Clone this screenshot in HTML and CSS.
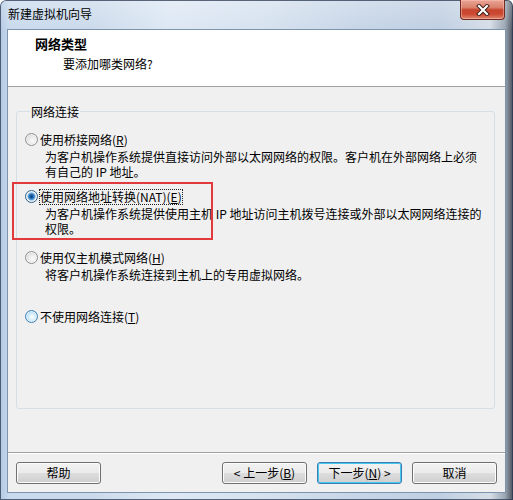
FILE: index.html
```html
<!DOCTYPE html>
<html>
<head>
<meta charset="utf-8">
<title>新建虚拟机向导</title>
<link rel="stylesheet" href="styles.css">
</head>
<body>
<div class="window">
  <div class="titlebar">
    <span class="title">新建虚拟机向导</span>
    <div class="close">
      <svg width="14" height="12" viewBox="0 0 14 12">
        <path d="M3 2 L11 10 M11 2 L3 10" stroke="#3a1a16" stroke-width="4" stroke-linecap="square" fill="none"/>
        <path d="M3 2 L11 10 M11 2 L3 10" stroke="#ffffff" stroke-width="2.2" stroke-linecap="square" fill="none"/>
      </svg>
    </div>
  </div>
  <div class="client">
    <div class="header">
      <div class="h-title">网络类型</div>
      <div class="h-sub">要添加哪类网络?</div>
    </div>
    <div class="body">
      <fieldset class="group">
        <legend>网络连接</legend>
        <div class="opt opt1">
          <div class="row"><span class="radio"></span><span class="label">使用桥接网络(<u>R</u>)</span></div>
          <div class="desc">为客户机操作系统提供直接访问外部以太网网络的权限。客户机在外部网络上必须<br>有自己的 IP 地址。</div>
        </div>
        <div class="opt opt2">
          <div class="row"><span class="radio checked"></span><span class="label focus">使用网络地址转换(NAT)(<u>E</u>)</span></div>
          <div class="desc">为客户机操作系统提供使用主机 IP 地址访问主机拨号连接或外部以太网网络连接的<br>权限。</div>
        </div>
        <div class="opt opt3">
          <div class="row"><span class="radio"></span><span class="label">使用仅主机模式网络(<u>H</u>)</span></div>
          <div class="desc">将客户机操作系统连接到主机上的专用虚拟网络。</div>
        </div>
        <div class="opt opt4">
          <div class="row"><span class="radio hover"></span><span class="label">不使用网络连接(<u>T</u>)</span></div>
        </div>
      </fieldset>
      <div class="footer">
        <div class="btn help">帮助</div>
        <div class="btn back">&lt; 上一步(<u>B</u>)</div>
        <div class="btn next default">下一步(<u>N</u>) &gt;</div>
        <div class="btn cancel">取消</div>
      </div>
    </div>
  </div>
  <div class="annot"></div>
</div>
</body>
</html>
```

FILE: styles.css
```css
html, body {
  margin: 0;
  padding: 0;
}
body {
  width: 513px;
  height: 500px;
  overflow: hidden;
  font-family: "Noto Sans CJK SC", "Noto Sans", sans-serif;
  font-size: 12px;
  color: #000;
  background: #fff;
}
.window {
  position: relative;
  width: 513px;
  height: 500px;
  box-sizing: border-box;
  display: flex;
  flex-direction: column;
  border-radius: 6px 6px 0 0;
  background:
    linear-gradient(180deg, rgba(255,255,255,0.25) 0px, rgba(255,255,255,0) 30px),
    linear-gradient(90deg, #b3c9e3 0px, #c9daee 10px, #cbdaeb 90px, #dde8f4 170px, #d6e2ef 260px, #c6d5e7 360px, #bfcfe2 440px, #d5dde7 490px, #9aa6b4 505px, #4a515c 513px);
  box-shadow: inset 0 0 0 1px rgba(40, 55, 80, 0.75);
}
.titlebar {
  height: 30px;
  display: flex;
  align-items: flex-start;
  flex-shrink: 0;
}
.title {
  margin: 6px 0 0 8px;
  line-height: 16px;
  font-size: 12px;
  color: #000;
}
.close {
  margin-left: auto;
  margin-right: 8px;
  width: 45px;
  height: 20px;
  box-sizing: border-box;
  border: 1px solid #6e2b22;
  border-top: none;
  border-radius: 0 0 4px 4px;
  background: linear-gradient(180deg, #eaa595 0%, #d9806c 40%, #c7442d 52%, #cc4a33 75%, #e08a72 100%);
  box-shadow: inset 0 0 0 1px rgba(255, 200, 190, 0.45);
  display: flex;
  align-items: center;
  justify-content: center;
}
.client {
  flex: 1;
  margin: 0 8px 8px 8px;
  display: flex;
  flex-direction: column;
  box-shadow: 0 0 0 1px #7d93ae;
  min-height: 0;
}
.header {
  height: 57px;
  box-sizing: border-box;
  background: #fff;
  border-bottom: 1px solid #a0a0a0;
  padding: 6px 0 0 27px;
  flex-shrink: 0;
}
.h-title {
  font-weight: bold;
  font-size: 13px;
  line-height: 16px;
}
.h-sub {
  margin: 4px 0 0 28px;
  line-height: 15px;
}
.body {
  flex: 1;
  background: #f0f0f0;
  display: flex;
  flex-direction: column;
  padding: 0 10px 0 8px;
  min-height: 0;
}
.group {
  margin: 17px 0 0 0;
  padding: 13px 0 0 8px;
  border: 1px solid #d5dfe5;
  border-radius: 3px;
  height: 305px;
  box-sizing: border-box;
  min-width: 0;
}
.group legend {
  margin-left: 5px;
  padding: 0 1px;
  line-height: 15px;
  font-size: 12px;
}
.opt {
  white-space: nowrap;
}
.opt2 { margin-top: 10px; }
.opt3 { margin-top: 14px; }
.opt4 { margin-top: 27px; }
.row {
  display: flex;
  align-items: center;
  height: 15px;
}
.label {
  line-height: 15px;
}
.label.focus {
  border: 1px dotted #222;
  margin-left: -1px;
  line-height: 14px;
}
.desc {
  margin-top: 2px;
  padding-left: 20px;
  line-height: 15px;
}
.radio {
  width: 13px;
  height: 13px;
  box-sizing: border-box;
  border-radius: 50%;
  border: 1px solid #8f8f8f;
  margin-right: 2px;
  flex-shrink: 0;
  background: radial-gradient(circle at 60% 60%, #fafafa 0%, #e9e9e9 45%, #cfcfcf 80%, #e8e8e8 100%);
  box-shadow: inset 0 0 0 1px #f4f4f4;
}
.radio.checked {
  border-color: #2c628b;
  background: radial-gradient(circle at 50% 50%, #0b3d72 0px, #1f6cb5 2px, #6ea9dc 3.5px, #dbe9f6 4.5px, #f4f4f4 6px);
}
.radio.hover {
  border-color: #3c7fb1;
  background: radial-gradient(circle at 55% 55%, #ffffff 0%, #d9eefc 35%, #a9d5f5 75%, #cde7fa 100%);
  box-shadow: inset 0 0 0 1px #e4f3fc;
}
.footer {
  margin: auto -10px 0 -8px;
  height: 40px;
  box-sizing: border-box;
  border-top: 1px solid #a0a0a0;
  box-shadow: inset 0 1px 0 #ffffff;
  padding: 9px 8px 0 8px;
  display: flex;
  flex-shrink: 0;
}
.btn {
  width: 85px;
  height: 22px;
  box-sizing: border-box;
  border: 1px solid #707070;
  border-radius: 3px;
  background: linear-gradient(180deg, #f2f2f2 0%, #ebebeb 48%, #dddddd 52%, #cfcfcf 100%);
  box-shadow: inset 0 0 0 1px #fcfcfc;
  text-align: center;
  line-height: 20px;
  font-size: 12px;
  white-space: nowrap;
}
.help { margin-right: auto; }
.next { margin: 0 10px; }
.btn.default {
  border-color: #3c7fb1;
  box-shadow: inset 0 0 0 1px #48c6f2;
  background: linear-gradient(180deg, #eaf6fd 0%, #d9f0fc 48%, #bee6fd 52%, #a7d9f5 100%);
  background: linear-gradient(180deg, #f2f2f2 0%, #ebebeb 48%, #dddddd 52%, #cfcfcf 100%);
}
.annot {
  position: absolute;
  left: 12px;
  top: 182px;
  width: 201px;
  height: 58px;
  box-sizing: border-box;
  border: 2px solid #e2393c;
  pointer-events: none;
}
```
